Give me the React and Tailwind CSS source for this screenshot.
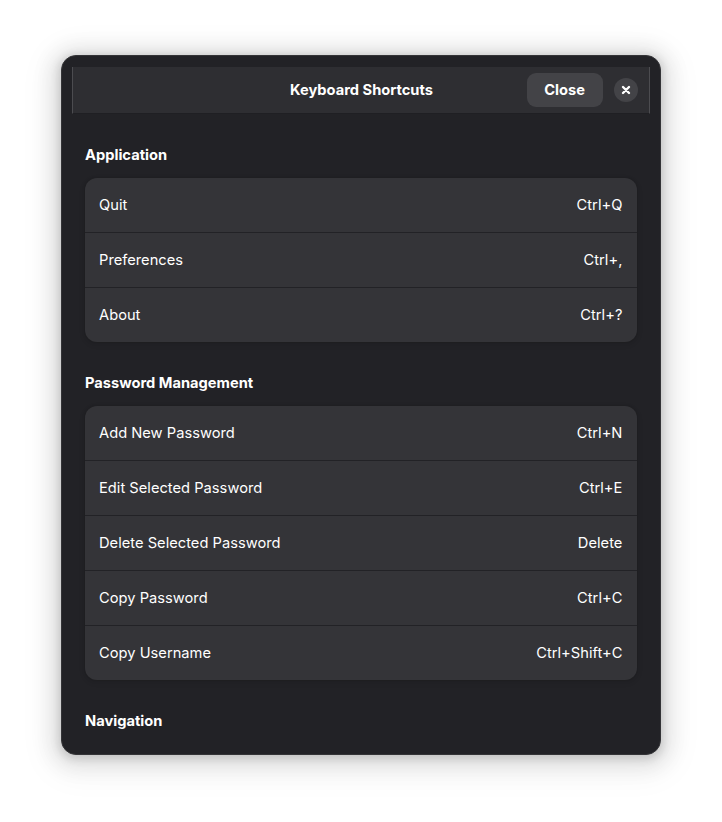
const sections = [
  {
    title: "Application",
    rows: [
      ["Quit", "Ctrl+Q"],
      ["Preferences", "Ctrl+,"],
      ["About", "Ctrl+?"],
    ],
  },
  {
    title: "Password Management",
    rows: [
      ["Add New Password", "Ctrl+N"],
      ["Edit Selected Password", "Ctrl+E"],
      ["Delete Selected Password", "Delete"],
      ["Copy Password", "Ctrl+C"],
      ["Copy Username", "Ctrl+Shift+C"],
    ],
  },
  { title: "Navigation", rows: [] },
];

function Header() {
  return (
    <header className="grid h-[47px] shrink-0 grid-cols-[1fr_auto_1fr] items-center border-x border-b border-x-[#4c4c50] border-b-[#1f1f23] bg-[#2e2e32]">
      <span />
      <h1 className="pl-px font-bold">Keyboard Shortcuts</h1>
      <div className="flex items-center justify-end gap-[11px] pr-[11px]">
        <button className="h-[34px] w-[76px] rounded-[9px] bg-[#434347] pr-px font-bold">Close</button>
        <button aria-label="Close window" className="flex size-6 items-center justify-center rounded-full bg-[#434347]">
          <svg width="16" height="16" viewBox="0 0 16 16" fill="none" stroke="white" strokeWidth="2.4" strokeLinecap="round">
            <path d="M5 5l6 6M11 5l-6 6" />
          </svg>
        </button>
      </div>
    </header>
  );
}

function Section({ title, rows }) {
  return (
    <section className="shrink-0">
      <h2 className="mb-[13px] h-5 font-bold">{title}</h2>
      {rows.length > 0 && (
        <div className="divide-y divide-[#222226] overflow-hidden rounded-xl bg-[#343438] shadow-[0_0_0_1px_rgba(0,0,6,0.03),0_1px_3px_1px_rgba(0,0,6,0.07),0_2px_6px_2px_rgba(0,0,6,0.03)]">
          {rows.map(([label, keys]) => (
            <div key={label} className="flex h-[55px] items-center justify-between pl-3.5 pr-[14.6px] tracking-[0.02px] last:h-[54px]">
              <span>{label}</span>
              <span>{keys}</span>
            </div>
          ))}
        </div>
      )}
    </section>
  );
}

export default function App() {
  return (
    <div className="flex h-[822px] w-[722px] flex-col items-center overflow-hidden bg-white pt-[55px] font-['Inter',sans-serif] text-[14.667px] leading-5 text-white">
      <main className="flex h-[700px] w-[600px] flex-col overflow-hidden rounded-[15px] border border-[#343437] bg-[#222226] px-2.5 pt-[11px] shadow-[0_2px_8px_2px_rgba(0,0,0,0.13),0_3px_20px_10px_rgba(0,0,0,0.09),0_6px_32px_16px_rgba(0,0,0,0.04)]">
        <Header />
        <div className="flex flex-col gap-[31px] px-[13px] pt-[31px]">
          {sections.map((section) => (
            <Section key={section.title} {...section} />
          ))}
        </div>
      </main>
    </div>
  );
}
